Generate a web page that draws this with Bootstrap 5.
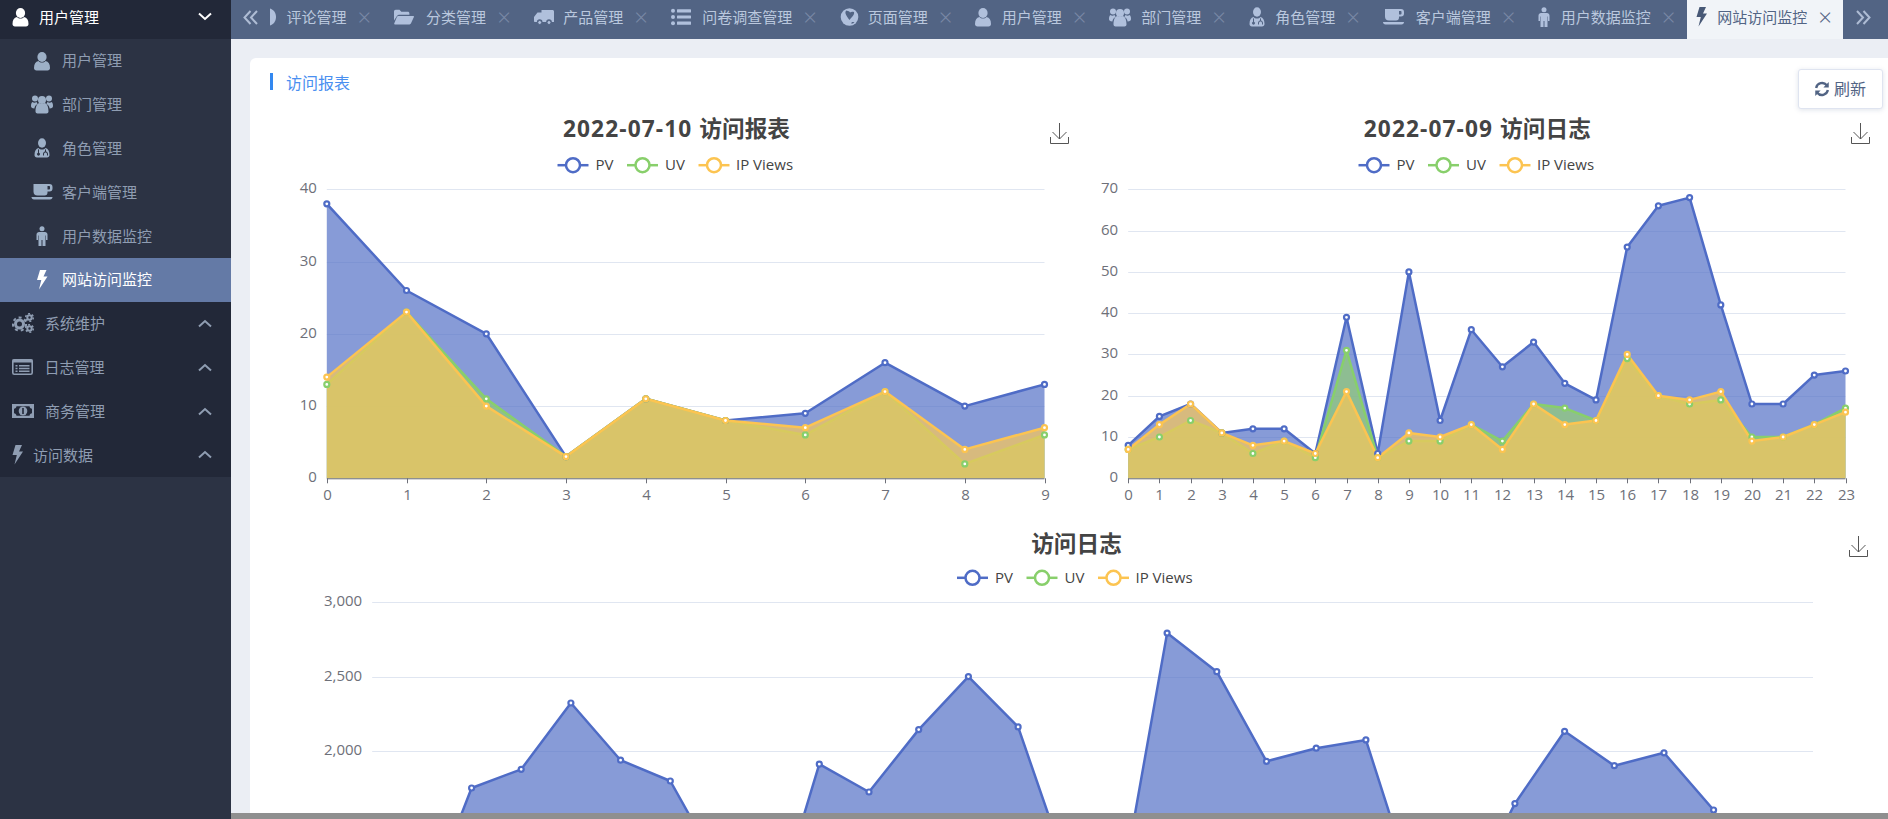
<!DOCTYPE html>
<html lang="zh-CN">
<head>
<meta charset="utf-8">
<title>网站访问监控</title>
<link href="https://cdn.jsdelivr.net/npm/bootstrap@5.3.0/dist/css/bootstrap.min.css" rel="stylesheet">
<script src="https://cdn.jsdelivr.net/npm/bootstrap@5.3.0/dist/js/bootstrap.bundle.min.js"></script>
<style>
html,body{height:100%;overflow:hidden;}
body{font-family:"Open Sans","Noto Sans CJK SC",sans-serif;font-size:15px;background:#ebeef4;}
use{fill:currentColor;}
.shell{height:819px;}
.side{width:231px;flex:none;background:#2c3344;overflow:hidden;}
.side-list{margin:-5px 0 0;padding:0;list-style:none;}
.side-row{height:43.8px;display:flex;align-items:center;background:#222838;color:#8f9db2;padding-left:12px;padding-right:19px;}
.side-row.open{color:#fff;}
.side-row .lbl{flex:1;}
.side-sub{height:43.8px;display:flex;align-items:center;background:#2c3344;color:#8f9db2;padding-left:31px;}
.side-sub.on{background:#647aa6;color:#fff;}
.side-sub .sub-ico{width:22px;height:20px;margin-right:9px;color:#9db0c7;flex:none;}
.side-sub.on .sub-ico{color:#fff;}
.side-ico{height:20px;flex:none;}
.side-chev{width:14px;height:9px;flex:none;}
.main-col{min-width:0;position:relative;}
.topbar{height:39px;flex:none;background:#526484;color:#bac8de;overflow:hidden;}
.tb-btn{flex:none;height:39px;display:flex;align-items:center;color:#aebcd4;padding-bottom:5px;}
.tb-prev{width:27.5px;padding-left:12px;}
.tb-next{width:43px;padding-left:11px;margin-left:auto;}
.tab-item{flex:none;height:39px;display:flex;align-items:center;padding:0 14px 5px 11.5px;white-space:nowrap;}
.tab-item.on{background:#f1f4f8;color:#526484;padding-left:9.5px;}
.tab-ico{height:20px;flex:none;color:#b0c0dc;}
.tab-item.on .tab-ico{color:#475876;}
.tab-x{width:11px;margin-left:11px;display:block;font-size:24px;font-weight:300;line-height:1;text-align:center;color:#7a89a6;}
.tab-item.on .tab-x{color:#526484;}
.content{min-height:0;overflow:hidden;padding:19px 0 0 19px;}
.sheet{border:0;border-radius:6px 0 0 0;background:#fff;padding:15px 10.5px 0 20px;height:900px;}
.sheet-title{border-left:3px solid #3388f0;padding-left:13px;line-height:20px;height:17px;font-size:16px;color:#4a8ff0;margin-bottom:5px;}
.chart-area{margin-left:5.5px;}
.chart-svg{display:block;width:100%;}
.chart-svg text{font-family:"Open Sans","Noto Sans CJK SC",sans-serif;}
.chart-svg .ct{font-size:22.7px;font-weight:700;fill:#444;}
.chart-svg .ct-latin{letter-spacing:1.1px;}
.refresh-btn{position:absolute;top:69px;right:5.4px;width:85px;height:40px;padding:0;display:flex;align-items:center;justify-content:center;gap:4px;background:#fff;color:#526484;font-size:16px;border:1px solid #dfe4f0;border-radius:3px;box-shadow:0 1px 5px rgba(80,100,140,.18);}
.scroll-bar{height:6px;flex:none;background:#8f8f8f;}
</style>
</head>
<body>
<svg width="0" height="0" class="position-absolute">
  <symbol id="i-user" viewBox="0 0 16 20"><ellipse cx="8" cy="6" rx="4.600" ry="5"/><path d="M0 17c0-4 1.500-6.500 4.500-7 1 1 2 1.500 3.500 1.500s2.500-.5 3.500-1.500c3 .5 4.500 3 4.500 7 0 1.500-1 2.500-2.500 2.500h-11C1 19.500 0 18.500 0 17z"/></symbol>
  <symbol id="i-team" viewBox="0 0 22 20"><circle cx="11" cy="6" r="4"/><path d="M4.500 17.500c0-5 1.500-8 4-8.500 .8.700 1.500 1 2.500 1s1.700-.3 2.500-1c2.500.5 4 3.500 4 8.500 0 1-1 2-2 2H6.500c-1 0-2-1-2-2z"/><circle cx="4" cy="4.500" r="3"/><circle cx="18" cy="4.500" r="3"/><path d="M0 12c0-2 .5-3.500 1.500-4 1 1 3 1 4-.2.200.8.600 1.500 1.200 2.200-2 .8-3 2.500-3.300 4.500C1 14.500 0 13.500 0 12z"/><path d="M22 12c0-2-.5-3.500-1.500-4-1 1-3 1-4-.2-.2.800-.6 1.500-1.200 2.200 2 .8 3 2.500 3.300 4.500C21 14.500 22 13.500 22 12z"/></symbol>
  <symbol id="i-role" viewBox="0 0 16 20"><ellipse cx="8" cy="5" rx="4" ry="4.700"/><path fill-rule="evenodd" d="M.5 17c0-4 1.500-6.500 4-7 1 1 2 1.500 3.500 1.500s2.500-.5 3.500-1.500c2.500.5 4 3 4 7 0 1.500-1 2.500-2.500 2.500H3C1.500 19.500.5 18.500.5 17zM4 11.500v3.200a1.500 1.500 0 1 0 1 0v-3.500zM11 11.300v2.200c-1.200.3-2 1.300-2 2.500v1.500h1V16c0-.8.700-1.500 1.500-1.500S13 15.200 13 16v1.500h1V16c0-1.200-.8-2.200-2-2.500v-2z"/></symbol>
  <symbol id="i-cup" viewBox="0 0 21 20"><path fill-rule="evenodd" d="M2 2h16a3 3 0 0 1 3 3v1.500a3 3 0 0 1-3 3h-2v1a3 3 0 0 1-3 3H6a4 4 0 0 1-4-4zM16 4v3.500h1.500c.6 0 1-.4 1-1V5c0-.6-.4-1-1-1z"/><path d="M0 15h21c0 1.500-1 2.500-2.500 2.500h-16C1 17.500 0 16.500 0 15z"/></symbol>
  <symbol id="i-man" viewBox="0 0 12 20"><circle cx="6" cy="2.700" r="2.500"/><path d="M3 6h6c1.200 0 2.500 1 2.500 2.500v5.500H10V9.500h-.5v10.500H6.500v-6h-1v6H2.500V9.500H2V14H.5V8.500C.5 7 1.800 6 3 6z"/></symbol>
  <symbol id="i-bolt" viewBox="0 0 11 20"><path d="M3.500 0H10L7 6.500h4L2.500 19.500 4.800 10H.5z"/></symbol>
  <symbol id="i-cogs" viewBox="0 0 22 20"><circle cx="7.500" cy="11" r="4" fill="none" stroke="currentColor" stroke-width="3"/><circle cx="7.500" cy="11" r="6.600" fill="none" stroke="currentColor" stroke-width="2" stroke-dasharray="3 3"/><circle cx="17.500" cy="4.500" r="2.200" fill="none" stroke="currentColor" stroke-width="2"/><circle cx="17.500" cy="4.500" r="3.800" fill="none" stroke="currentColor" stroke-width="1.500" stroke-dasharray="2 2"/><circle cx="17.500" cy="15.500" r="2.200" fill="none" stroke="currentColor" stroke-width="2"/><circle cx="17.500" cy="15.500" r="3.800" fill="none" stroke="currentColor" stroke-width="1.500" stroke-dasharray="2 2"/></symbol>
  <symbol id="i-listalt" viewBox="0 0 21 20"><rect x=".8" y="2.800" width="19.400" height="14.400" rx="1.500" fill="none" stroke="currentColor" stroke-width="1.600"/><rect x=".5" y="2.500" width="20" height="3"/><path d="M3.500 8h2v1.500h-2zM7 8h10.500v1.500H7zM3.500 10.800h2v1.500h-2zM7 10.800h10.500v1.500H7zM3.500 13.600h2v1.500h-2zM7 13.600h10.500v1.500H7z"/></symbol>
  <symbol id="i-money" viewBox="0 0 22 20"><path fill-rule="evenodd" d="M0 3h22v14H0zM4.500 5.200C4.300 6.500 3.300 7.500 2 7.700v4.600c1.300.2 2.300 1.200 2.500 2.500h13c.2-1.300 1.200-2.300 2.500-2.500V7.700c-1.300-.2-2.300-1.200-2.500-2.500z"/><ellipse cx="11" cy="10" rx="4.300" ry="4.500"/><rect x="10.200" y="7" width="1.600" height="6" fill="#222838"/></symbol>
  <symbol id="i-folder" viewBox="0 0 20 20"><path d="M0 13.500V4.500C0 3.500.8 2.800 1.700 2.800h3.800l1.800 2h6.500c.9 0 1.600.7 1.600 1.600v1.300H5.500c-1.200 0-2.100.5-2.700 1.500z"/><path d="M4.300 9h15c.6 0 .9.600.6 1.100l-3 6.500c-.3.500-.8.800-1.300.8H.9c-.6 0-.9-.6-.6-1.100l2.700-6.500c.3-.5.800-.8 1.300-.8z"/></symbol>
  <symbol id="i-truck" viewBox="0 0 20 20"><path d="M7.500 3H18.500c.8 0 1.500.7 1.500 1.500V15h-2.200a2.800 2.800 0 0 0-5.600 0H8.500a2.800 2.800 0 0 0-5.600 0H.8c-.5 0-.8-.3-.8-.8V10l3.500-4.500h4z"/><circle cx="5.700" cy="15.500" r="2" stroke="#526484"/><circle cx="15" cy="15.500" r="2" stroke="#526484"/></symbol>
  <symbol id="i-list" viewBox="0 0 20 20"><circle cx="2" cy="3.800" r="2"/><circle cx="2" cy="10" r="2"/><circle cx="2" cy="16.200" r="2"/><rect x="6" y="2.300" width="14" height="3.200" rx=".5"/><rect x="6" y="8.400" width="14" height="3.200" rx=".5"/><rect x="6" y="14.600" width="14" height="3.200" rx=".5"/></symbol>
  <symbol id="i-globe" viewBox="0 0 19 20"><circle cx="9.500" cy="10" r="8.800"/><path fill="#526484" d="M6.500 3.500c2 .5 3 1 3.500 2 1-.8 2.500-1 4-.5.500 1.500-.5 3.500-2 5-1 1-1.800 2-2.500 3-1.500-2-3.500-4.500-4-6.500-.2-1.200 0-2.500 1-3zM12 15h2.500l-1.500 1.500h-2z"/></symbol>
  <symbol id="i-half" viewBox="0 0 6 20"><path d="M0 1.500c3.500 1 6 4.300 6 8.500s-2.500 7.500-6 8.500z"/></symbol>
</svg>

<div class="shell d-flex">
  <aside class="side">
    <ul class="side-list">
      <li class="side-row open"><svg class="side-ico me-2" width="19" height="20"><use href="#i-user" width="17" height="20"/></svg><span class="lbl">用户管理</span><svg class="side-chev" viewBox="0 0 14 9" fill="none" stroke="currentColor" stroke-width="2"><polyline points="1,1.500 7,7 13,1.500"/></svg></li>
      <li class="side-sub"><svg class="sub-ico"><use href="#i-user"/></svg>用户管理</li>
      <li class="side-sub"><svg class="sub-ico"><use href="#i-team"/></svg>部门管理</li>
      <li class="side-sub"><svg class="sub-ico"><use href="#i-role"/></svg>角色管理</li>
      <li class="side-sub"><svg class="sub-ico"><use href="#i-cup"/></svg>客户端管理</li>
      <li class="side-sub"><svg class="sub-ico"><use href="#i-man"/></svg>用户数据监控</li>
      <li class="side-sub on"><svg class="sub-ico"><use href="#i-bolt"/></svg>网站访问监控</li>
      <li class="side-row"><svg class="side-ico" width="33" height="20"><use href="#i-cogs" width="22" height="20"/></svg><span class="lbl">系统维护</span><svg class="side-chev" viewBox="0 0 14 9" fill="none" stroke="currentColor" stroke-width="2"><polyline points="1,7.500 7,2 13,7.500"/></svg></li>
      <li class="side-row"><svg class="side-ico" width="32.500" height="20"><use href="#i-listalt" width="21" height="20"/></svg><span class="lbl">日志管理</span><svg class="side-chev" viewBox="0 0 14 9" fill="none" stroke="currentColor" stroke-width="2"><polyline points="1,7.500 7,2 13,7.500"/></svg></li>
      <li class="side-row"><svg class="side-ico" width="33" height="20"><use href="#i-money" width="22" height="20"/></svg><span class="lbl">商务管理</span><svg class="side-chev" viewBox="0 0 14 9" fill="none" stroke="currentColor" stroke-width="2"><polyline points="1,7.500 7,2 13,7.500"/></svg></li>
      <li class="side-row"><svg class="side-ico" width="21" height="20"><use href="#i-bolt" width="11" height="20"/></svg><span class="lbl">访问数据</span><svg class="side-chev" viewBox="0 0 14 9" fill="none" stroke="currentColor" stroke-width="2"><polyline points="1,7.500 7,2 13,7.500"/></svg></li>
    </ul>
  </aside>

  <div class="main-col flex-grow-1 d-flex flex-column">
    <nav class="topbar d-flex align-items-center">
      <span class="tb-btn tb-prev"><svg width="15" height="15" viewBox="0 0 15 15" fill="none" stroke="currentColor" stroke-width="2"><polyline points="7.500,1 1.500,7.500 7.500,14"/><polyline points="14,1 8,7.500 14,14"/></svg></span>
      <span class="tab-item"><svg class="tab-ico" width="16.600"><use href="#i-half" width="6" height="20"/></svg>评论管理<span class="tab-x">×</span></span>
      <span class="tab-item"><svg class="tab-ico" width="32"><use href="#i-folder" width="20" height="20"/></svg>分类管理<span class="tab-x">×</span></span>
      <span class="tab-item"><svg class="tab-ico" width="29.500"><use href="#i-truck" width="20" height="20"/></svg>产品管理<span class="tab-x">×</span></span>
      <span class="tab-item"><svg class="tab-ico" width="31.500"><use href="#i-list" width="20" height="20"/></svg>问卷调查管理<span class="tab-x">×</span></span>
      <span class="tab-item"><svg class="tab-ico" width="28"><use href="#i-globe" width="19" height="20"/></svg>页面管理<span class="tab-x">×</span></span>
      <span class="tab-item"><svg class="tab-ico" width="26.500"><use href="#i-user" width="16" height="20"/></svg>用户管理<span class="tab-x">×</span></span>
      <span class="tab-item"><svg class="tab-ico" width="32"><use href="#i-team" width="22" height="20"/></svg>部门管理<span class="tab-x">×</span></span>
      <span class="tab-item"><svg class="tab-ico" width="26.500"><use href="#i-role" width="16" height="20"/></svg>角色管理<span class="tab-x">×</span></span>
      <span class="tab-item"><svg class="tab-ico" width="33"><use href="#i-cup" width="21" height="20"/></svg>客户端管理<span class="tab-x">×</span></span>
      <span class="tab-item"><svg class="tab-ico" width="22.500"><use href="#i-man" width="12" height="20"/></svg>用户数据监控<span class="tab-x">×</span></span>
      <span class="tab-item on"><svg class="tab-ico" width="21"><use href="#i-bolt" width="11" height="20"/></svg>网站访问监控<span class="tab-x">×</span></span>
      <span class="tb-btn tb-next"><svg width="15" height="15" viewBox="0 0 15 15" fill="none" stroke="currentColor" stroke-width="2"><polyline points="1,1 7,7.500 1,14"/><polyline points="7.500,1 13.500,7.500 7.500,14"/></svg></span>
    </nav>

    <div class="content flex-grow-1">
      <div class="card sheet">
        <div class="sheet-title">访问报表</div>
        <div class="chart-area">
          <div class="row g-0">
            <div class="col-6"><svg class="chart-svg" id="c1" height="413"></svg></div>
            <div class="col-6"><svg class="chart-svg" id="c2" height="413"></svg></div>
            <div class="col-12"><svg class="chart-svg" id="c3" height="305"></svg></div>
          </div>
        </div>
      </div>
    </div>
    <button type="button" class="btn refresh-btn">
      <svg width="16" height="16" viewBox="0 0 15 15" fill="none" stroke="currentColor" stroke-width="2.200"><path d="M2 6.500A5.700 5.700 0 0 1 12 4"/><path d="M13 8.500A5.700 5.700 0 0 1 3 11"/><path d="M13.800 1v5h-5z" fill="currentColor" stroke="none"/><path d="M1.200 14V9h5z" fill="currentColor" stroke="none"/></svg>
      刷新
    </button>
    <div class="scroll-bar"></div>
  </div>
</div>

<script>
const COL = ['#4f6cc6','#88cf6b','#fcc451'];
const AREA = ['#5470c6','#91cc75','#fac858'];
const NAMES = ['PV','UV','IP Views'];
function fmt(n){return n>=1000?String(n).replace(/(\d)(\d{3})$/,'$1,$2'):String(n);}
function draw(id,o){
  const {x0,x1,y0,y1,ymax,step,series,titleLatin,titleCjk,titleY,legendX,legendY,dlX,xLabels,viewH}=o;
  const n=series[0].length, px=i=>x0+(x1-x0)*i/(n-1), py=v=>y1-(y1-y0)*v/ymax;
  let s='';
  s+=`<text x="${o.titleX}" y="${titleY+9}" text-anchor="middle" class="ct">${titleLatin?`<tspan class="ct-latin">${titleLatin} </tspan>`:''}${titleCjk}</text>`;
  [[0,38,'PV'],[69.5,107.5,'UV'],[141,178.5,'IP Views']].forEach((l,k)=>{
    const lx=legendX+l[0];
    s+=`<path d="M${lx} ${legendY}h31" stroke="${COL[k]}" stroke-width="2.500" fill="none"/><circle cx="${lx+15.5}" cy="${legendY}" r="7" fill="#fff" stroke="${COL[k]}" stroke-width="2.500"/>`;
    s+=`<text x="${legendX+l[1]}" y="${legendY+5}" font-size="15" fill="#444">${NAMES[k]}</text>`;
  });
  s+=`<g fill="none" stroke="#555" stroke-width="1"><path d="M${dlX-9.5} 42v6.500h18v-6.500"/><path d="M${dlX-.5} 28v16M${dlX-7.5} 37l7 7 7-7"/></g>`;
  for(let v=0;v<=ymax;v+=step){
    const y=Math.round(py(v))+.5;
    if(y>viewH) continue;
    if(v>0) s+=`<path d="M${x0} ${y}H${x1}" stroke="#e0e6f1" stroke-width="1"/>`;
    s+=`<text x="${x0-10}" y="${y+3}" text-anchor="end" font-size="15" fill="#6e7079">${fmt(v)}</text>`;
  }
  series.forEach((d,k)=>{
    const pts=d.map((v,i)=>`${px(i).toFixed(1)},${py(v).toFixed(1)}`).join(' ');
    s+=`<polygon points="${px(0).toFixed(1)},${y1} ${pts} ${px(n-1).toFixed(1)},${y1}" fill="${AREA[k]}" fill-opacity=".7"/>`;
    s+=`<polyline points="${pts}" fill="none" stroke="${COL[k]}" stroke-width="2.500" stroke-linejoin="round"/>`;
  });
  series.forEach((d,k)=>{
    d.forEach((v,i)=>{s+=`<circle cx="${px(i).toFixed(1)}" cy="${py(v).toFixed(1)}" r="2.500" fill="#fff" stroke="${COL[k]}" stroke-width="2.200"/>`;});
  });
  if(xLabels){
    s+=`<path d="M${x0} ${y1+.5}H${x1}" stroke="#6e7079" stroke-width="1"/>`;
    for(let i=0;i<n;i++){
      const x=Math.round(px(i))+.5;
      s+=`<path d="M${x} ${y1}v5" stroke="#6e7079"/><text x="${x}" y="${y1+21.5}" text-anchor="middle" font-size="15" fill="#6e7079">${i}</text>`;
    }
  }
  document.getElementById(id).innerHTML=s;
}
draw('c1',{viewH:413,x0:50.8,x1:768.5,y0:94.3,y1:383.3,ymax:40,step:10,xLabels:true,titleLatin:'2022-07-10',titleCjk:'访问报表',titleX:400.5,titleY:33,legendX:281.5,legendY:70.2,dlX:784,
  series:[[38,26,20,3,11,8,9,16,10,13],[13,23,11,3,11,8,6,12,2,6],[14,23,10,3,11,8,7,12,4,7]]});
draw('c2',{viewH:413,x0:51.2,x1:768.5,y0:94.3,y1:383.3,ymax:70,step:10,xLabels:true,titleLatin:'2022-07-09',titleCjk:'访问日志',titleX:400.3,titleY:33,legendX:281.5,legendY:70.2,dlX:784,
  series:[[8,15,18,11,12,12,6,39,6,50,14,36,27,33,23,19,56,66,68,42,18,18,25,26],[7,10,14,11,6,9,5,31,5,9,9,13,9,18,17,14,29,20,18,19,10,10,13,17],[7,13,18,11,8,9,6,21,5,11,10,13,7,18,13,14,30,20,19,21,9,10,13,16]]});
draw('c3',{viewH:305,x0:96.2,x1:1537,y0:94.3,y1:540,ymax:3000,step:500,xLabels:false,titleLatin:'',titleCjk:'访问日志',titleX:800.5,titleY:35,legendX:681,legendY:69.8,dlX:1583,
  series:[[1000,889,1750,1876,2322,1937,1797,1199,808,1910,1723,2143,2500,2161,1192,910,2793,2533,1930,2018,2074,1031,984,1645,2132,1900,1987,1602,1000,1000]]});
</script>
</body>
</html>
